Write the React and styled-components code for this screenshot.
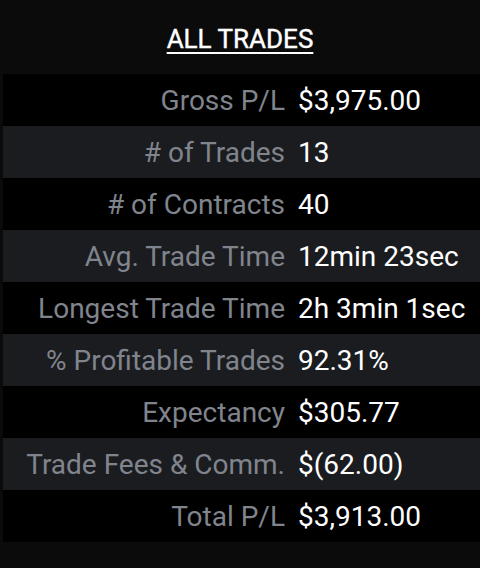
import React from 'react';
import styled, { createGlobalStyle } from 'styled-components';

const GlobalStyle = createGlobalStyle`
  html, body {
    margin: 0;
    padding: 0;
    background: #0b0b0c;
  }
  body {
    font-family: Roboto, "Noto Sans", sans-serif;
  }
`;

const Page = styled.div`
  width: 480px;
  height: 568px;
  background: #0b0b0c;
  overflow: hidden;
`;

const Title = styled.h2`
  margin: 0;
  padding-top: 24px;
  height: 74px;
  box-sizing: border-box;
  text-align: center;
  font-size: 26px;
  font-weight: 400;
  -webkit-text-stroke: 0.4px #fff;
  color: #fff;
  text-decoration: underline;
  text-underline-offset: 4px;
  text-decoration-thickness: 2px;
  line-height: 30px;
`;

const Table = styled.div`
  margin-left: 3px;
  display: grid;
  grid-template-columns: 282px 1fr;
`;

const Row = styled.div`
  display: contents;

  & > div {
    background: ${(p) => (p.$alt ? '#1b1c20' : '#000')};
  }
`;

const Label = styled.div`
  height: 52px;
  display: flex;
  align-items: center;
  justify-content: flex-end;
  font-size: 28px;
  color: #80858d;
  white-space: nowrap;
`;

const Value = styled.div`
  height: 52px;
  display: flex;
  align-items: center;
  padding-left: 13px;
  font-size: 28px;
  color: #fff;
  white-space: nowrap;
`;

const stats = [
  ['Gross P/L', '$3,975.00'],
  ['# of Trades', '13'],
  ['# of Contracts', '40'],
  ['Avg. Trade Time', '12min 23sec'],
  ['Longest Trade Time', '2h 3min 1sec'],
  ['% Profitable Trades', '92.31%'],
  ['Expectancy', '$305.77'],
  ['Trade Fees & Comm.', '$(62.00)'],
  ['Total P/L', '$3,913.00'],
];

const App = () => (
  <Page>
    <GlobalStyle />
    <Title>ALL TRADES</Title>
    <Table>
      {stats.map(([label, value], i) => (
        <Row key={label} $alt={i % 2 === 1}>
          <Label>{label}</Label>
          <Value>{value}</Value>
        </Row>
      ))}
    </Table>
  </Page>
);

export default App;
